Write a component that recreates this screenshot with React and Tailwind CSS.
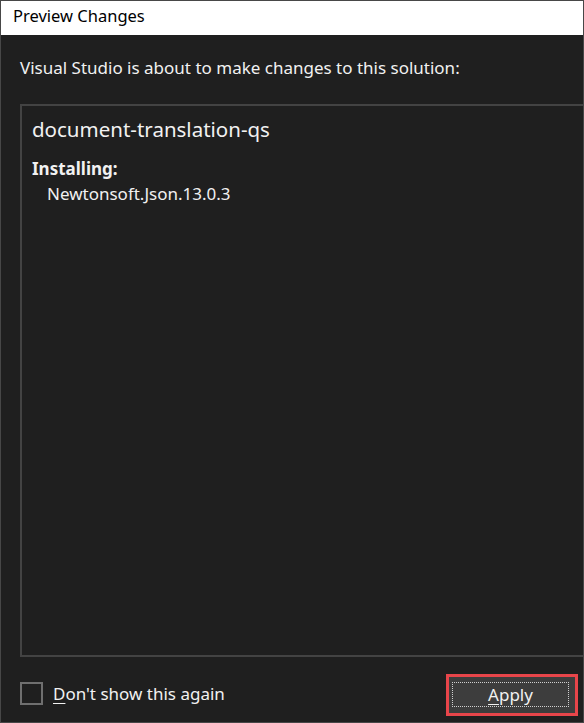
import React, { useState } from "react";

const font = { fontFamily: '"Noto Sans", "Open Sans", Arial, sans-serif' };

const App = () => {
    const [dontShow, setDontShow] = useState(false);

    return (
        <div
            className="w-[584px] h-[723px] flex flex-col bg-[#1f1f1f] border border-[#474747] overflow-hidden"
            style={font}
        >
            {/* title bar */}
            <div className="h-[34px] shrink-0 bg-white pl-3 text-[16.5px] leading-[29px] text-black">
                Preview Changes
            </div>

            <div className="flex-1 flex flex-col pl-[19px]">
                <p className="mt-[21px] text-[17px] leading-[24px] text-[#f1f1f1]">
                    Visual Studio is about to make changes to this solution:
                </p>

                {/* changes panel */}
                <div className="mt-[24px] h-[553px] shrink-0 border-l-2 border-t-2 border-b-2 border-[#434343] pl-[10px] pt-[9px]">
                    <div className="text-[20.5px] leading-[28px] text-[#f1f1f1]">
                        document-translation-qs
                    </div>
                    <div className="mt-[14px] text-[17px] leading-[24px] font-bold text-[#f1f1f1]">
                        Installing:
                    </div>
                    <div className="mt-[1px] pl-[15px] text-[17px] leading-[24px] text-[#f1f1f1]">
                        Newtonsoft.Json.13.0.3
                    </div>
                </div>

                {/* footer */}
                <div className="flex items-center justify-between mt-[17px] pr-[5px]">
                    <label className="flex items-center gap-[10px] cursor-pointer -mt-[3px]">
                        <span
                            className="w-[23px] h-[23px] border-2 border-[#6f6f6f] flex items-center justify-center"
                            onClick={() => setDontShow(!dontShow)}
                        >
                            {dontShow && <span className="w-[11px] h-[11px] bg-[#f1f1f1]" />}
                        </span>
                        <span className="text-[17px] leading-[24px] text-[#f1f1f1]">
                            <span className="underline underline-offset-[3px]">D</span>on't show this again
                        </span>
                    </label>

                    <div className="w-[132px] h-[42px] border-[3px] border-[#e8454a] bg-[#3d3d3d] pl-[3px] pr-[6px] pt-[5px] pb-[6px]">
                        <button className="w-full h-full border border-dotted border-[#d0d0d0] bg-[#3d3d3d] text-[17px] text-[#f1f1f1] leading-none">
                            <span className="underline underline-offset-[3px]">A</span>pply
                        </button>
                    </div>
                </div>
            </div>
        </div>
    );
};

export default App;
